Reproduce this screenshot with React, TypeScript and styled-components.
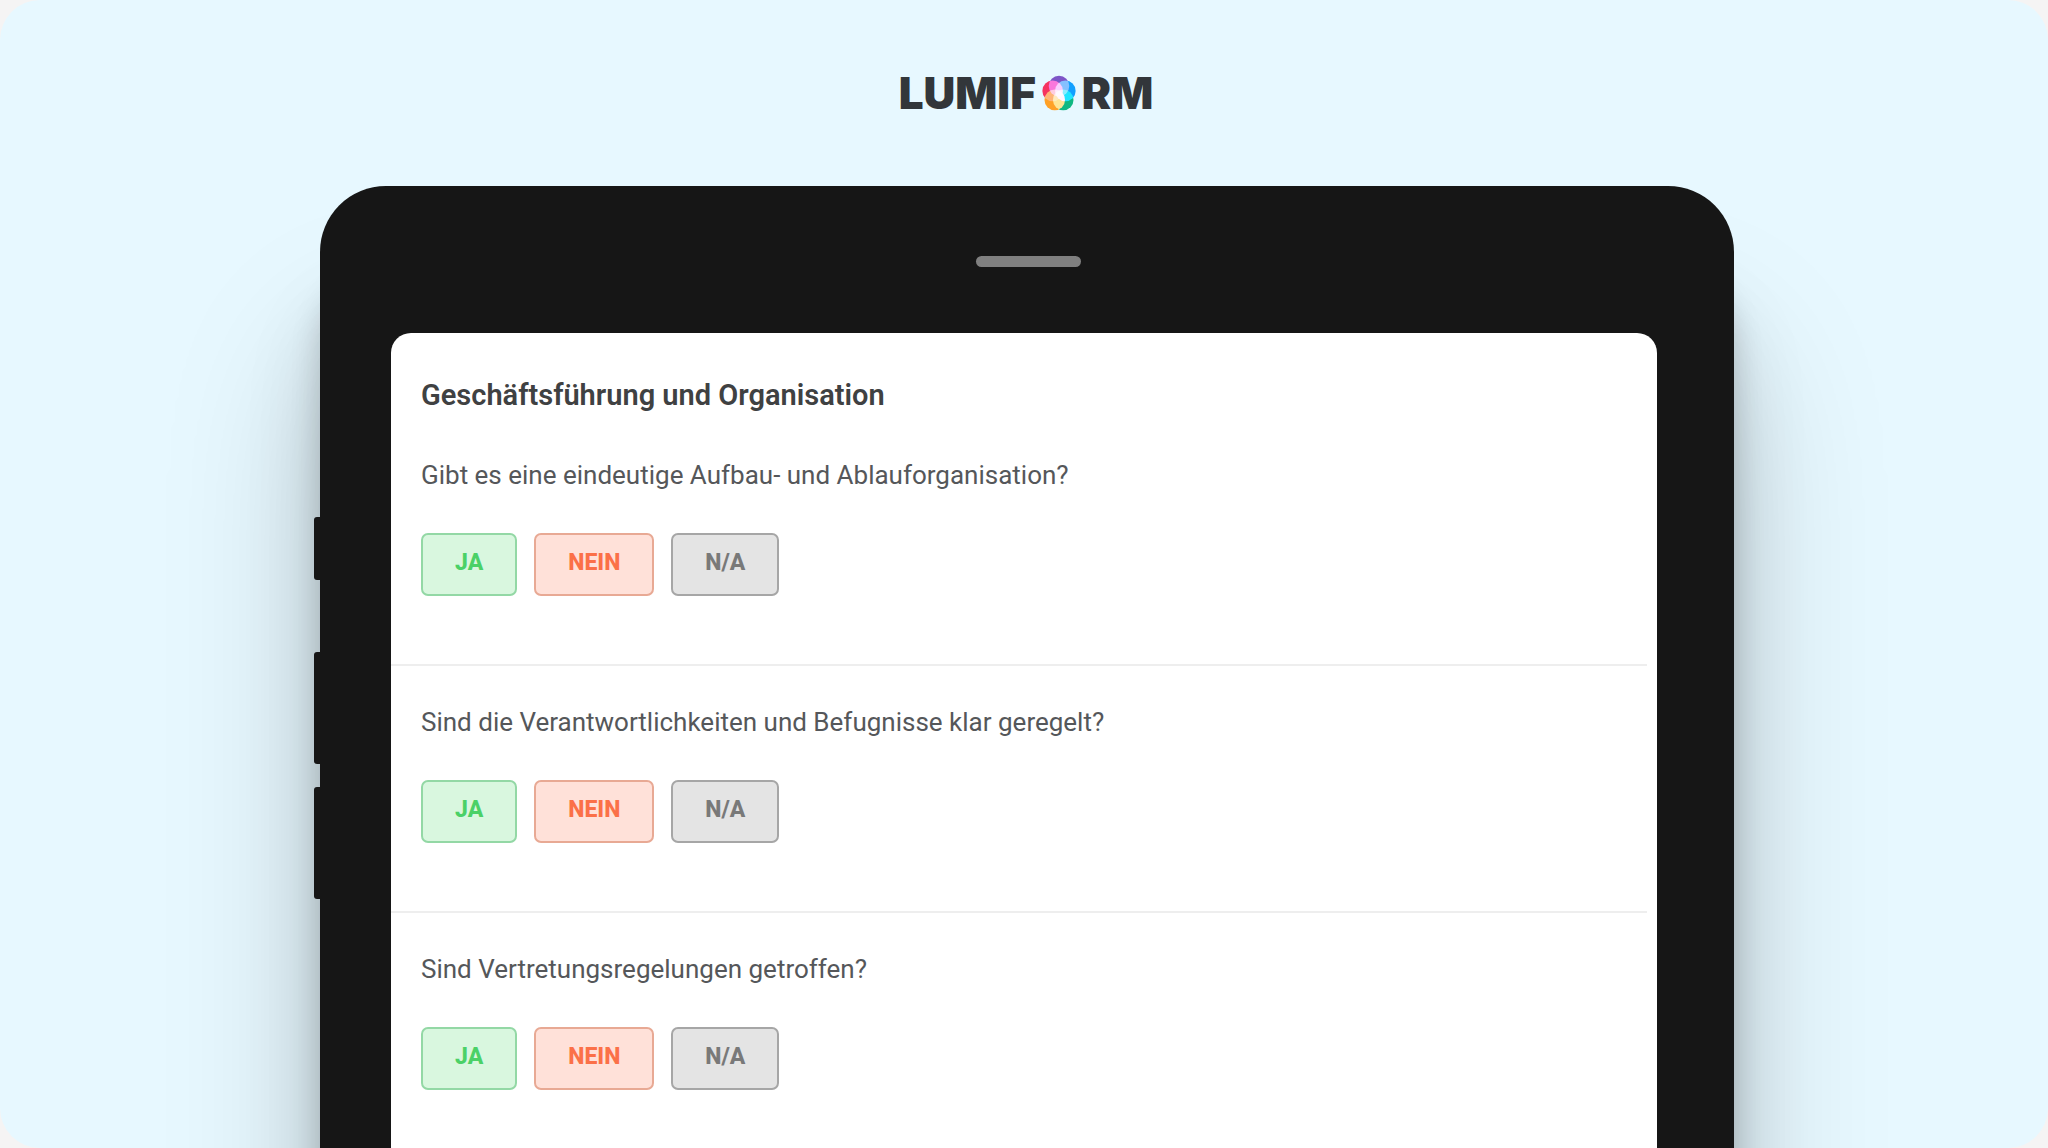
import React from "react";
import styled, { createGlobalStyle, css } from "styled-components";

const GlobalStyle = createGlobalStyle`
  *, *::before, *::after { box-sizing: border-box; }
  body {
    margin: 0;
    background: #f5f4f4;
    color: #55575a;
    font-family: Roboto, "Liberation Sans", sans-serif;
  }
`;

const Stage = styled.main`
  display: flex;
  flex-direction: column;
  height: 100vh;
  overflow: hidden;
  border-radius: 40px;
  background: #e7f8ff;
`;

const Brand = styled.header`
  display: flex;
  align-items: center;
  justify-content: center;
  gap: 6px;
  flex: none;
  height: 186px;
  padding-left: 4px;
  color: #32363a;
  font: 900 44px/48px Inter, Roboto, sans-serif;
`;

const BrandMark = styled.svg`
  width: 34px;
  height: 36px;
  isolation: isolate;

  circle {
    mix-blend-mode: screen;
  }
`;

const Tablet = styled.div`
  position: relative;
  display: flex;
  flex: 1 0 auto;
  flex-direction: column;
  margin: 0 314px -300px 320px;
  padding: 0 77px 0 71px;
  border-radius: 66px 66px 0 0;
  background: #161616;
  box-shadow:
    0 160px 160px rgba(0, 0, 0, 0.18),
    0 120px 80px rgba(0, 0, 0, 0.12),
    0 90px 30px rgba(0, 0, 0, 0.16);
`;

const Bezel = styled.div`
  display: flex;
  align-items: center;
  justify-content: center;
  height: 147px;
  padding: 4px 0 0 8px;
`;

const Speaker = styled.span`
  width: 105px;
  height: 11px;
  border-radius: 6px;
  background: #808080;
`;

const SideKey = styled.span<{ $top: number; $length: number }>`
  position: absolute;
  top: ${({ $top }) => $top}px;
  left: -6px;
  width: 8px;
  height: ${({ $length }) => $length}px;
  border-radius: 3px 0 0 3px;
  background: #161616;
`;

const Screen = styled.div`
  flex: 1;
  padding: 44px 10px 0 0;
  border-radius: 20px 20px 0 0;
  background: #fff;
`;

const Title = styled.h1`
  margin: 0 0 4px;
  padding-left: 30px;
  color: #3f4142;
  font-size: 29px;
  font-weight: 600;
  line-height: 36px;
`;

const Question = styled.section`
  height: 247px;
  padding: 40px 0 0 30px;
  border-top: 2px solid transparent;

  & + & {
    border-color: #eeeeee;
  }
`;

const Prompt = styled.h2`
  margin: 0;
  font-size: 26px;
  font-weight: 400;
  line-height: 32px;
`;

const Answers = styled.div`
  display: flex;
  gap: 17px;
  margin-top: 42px;
`;

type Tone = "yes" | "no" | "na";

const tones = {
  yes: css`
    border-color: #93d8a5;
    background: #d9f7df;
    color: #4bd167;
  `,
  no: css`
    border-color: #e8a994;
    background: #ffe1d9;
    color: #fb7048;
  `,
  na: css`
    border-color: #a6a6a6;
    background: #e4e4e4;
    color: #797979;
  `,
};

const Answer = styled.button<{ $tone: Tone }>`
  height: 63px;
  padding: 0 32px 4px;
  border: 2px solid;
  border-radius: 7px;
  font: 800 23px/28px Roboto, "Liberation Sans", sans-serif;
  cursor: pointer;
  ${({ $tone }) => tones[$tone]}
`;

const questions = [
  "Gibt es eine eindeutige Aufbau- und Ablauforganisation?",
  "Sind die Verantwortlichkeiten und Befugnisse klar geregelt?",
  "Sind Vertretungsregelungen getroffen?",
];

const answers: { label: string; tone: Tone }[] = [
  { label: "JA", tone: "yes" },
  { label: "NEIN", tone: "no" },
  { label: "N/A", tone: "na" },
];

const sideKeys = [
  { top: 331, length: 63 },
  { top: 466, length: 112 },
  { top: 601, length: 112 },
];

function LumiformMark() {
  return (
    <BrandMark viewBox="0 0 32 34" aria-hidden="true">
      <circle cx="16" cy="10.5" r="9.7" fill="#7d55c7" />
      <circle cx="22" cy="15" r="9.7" fill="#12a0ff" />
      <circle cx="10" cy="15" r="9.7" fill="#f5335f" />
      <circle cx="20" cy="23.5" r="9.7" fill="#0fb882" />
      <circle cx="12" cy="23.5" r="9.7" fill="#ffa126" />
    </BrandMark>
  );
}

export default function App() {
  return (
    <>
      <GlobalStyle />
      <Stage>
        <Brand>
          <span>LUMIF</span>
          <LumiformMark />
          <span>RM</span>
        </Brand>
        <Tablet>
          {sideKeys.map(({ top, length }) => (
            <SideKey key={top} $top={top} $length={length} />
          ))}
          <Bezel>
            <Speaker />
          </Bezel>
          <Screen>
            <Title>Geschäftsführung und Organisation</Title>
            {questions.map((text, index) => (
              <Question key={text} aria-labelledby={`question-${index}`}>
                <Prompt id={`question-${index}`}>{text}</Prompt>
                <Answers>
                  {answers.map(({ label, tone }) => (
                    <Answer key={label} type="button" $tone={tone}>
                      {label}
                    </Answer>
                  ))}
                </Answers>
              </Question>
            ))}
          </Screen>
        </Tablet>
      </Stage>
    </>
  );
}
